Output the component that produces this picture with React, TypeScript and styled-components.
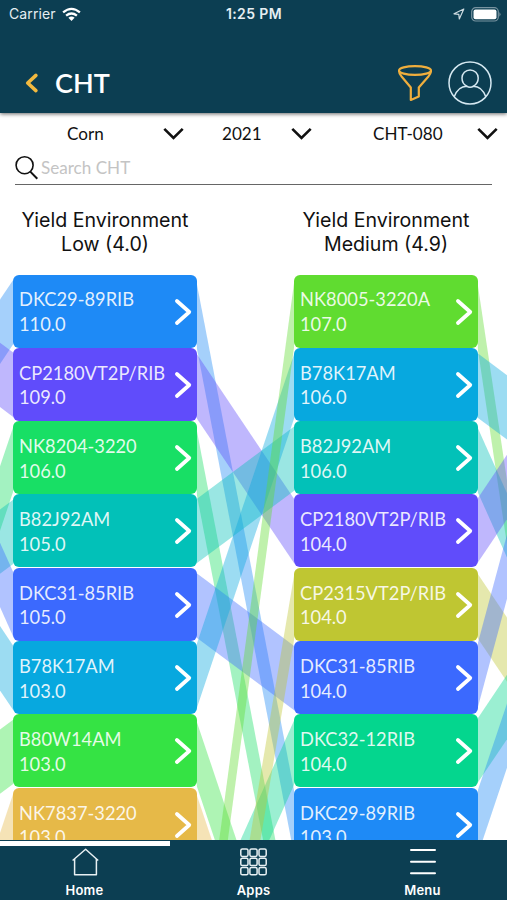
import React from 'react';
import styled, { createGlobalStyle } from 'styled-components';

const GlobalStyle = createGlobalStyle`
  * { box-sizing: border-box; }
  body { margin: 0; background: #fff; }
  button { border: 0; padding: 0; margin: 0; background: none; color: inherit; font: inherit; text-align: inherit; }
  svg { display: block; flex: none; }
`;

const NAVY = '#0c3e52';
const PITCH = 73.33;
const COLUMN_STEP = 281;
const RIBBON_INSET = 4.5;

const Screen = styled.div`
  width: 507px;
  height: 900px;
  display: flex;
  flex-direction: column;
  overflow: hidden;
  background: #fff;
  color: #111;
  font-family: Lato, sans-serif;
`;

const Header = styled.header`
  height: 113px;
  flex: none;
  background: ${NAVY};
  color: #fff;
  box-shadow: 0 1px 4px rgba(0, 0, 0, 0.6);
  z-index: 1;
`;

const StatusBar = styled.div`
  height: 28px;
  padding: 0 6px 0 9px;
  display: grid;
  grid-template-columns: 1fr auto 1fr;
  align-items: center;
  font: 400 14px/28px Inter, sans-serif;
  color: #e6eef2;
`;

const StatusSide = styled.div<{ $end?: boolean }>`
  display: flex;
  align-items: center;
  gap: 6px;
  letter-spacing: 0.1px;
  justify-content: ${(p) => (p.$end ? 'flex-end' : 'flex-start')};
`;

const Clock = styled.span`
  font-weight: 600;
  font-size: 14px;
  letter-spacing: 0.4px;
  padding-right: 2px;
`;

const TitleBar = styled.div`
  height: 82px;
  padding: 28px 15px 0 24px;
  display: flex;
  align-items: flex-start;
`;

const BackButton = styled.button`
  margin-top: 16px;
`;

const Title = styled.h1`
  margin: 9px auto 0 16px;
  font-size: 27px;
  line-height: 36px;
  font-weight: 600;
`;

const HeaderActions = styled.div`
  display: flex;
  align-items: center;
  gap: 16px;
  padding-top: 5px;
`;

const Filters = styled.div`
  height: 41px;
  flex: none;
  display: grid;
  grid-template-columns: 184px 128px 186px;
`;

const FilterSelect = styled.button<{ $inset: number }>`
  display: flex;
  align-items: center;
  justify-content: space-between;
  padding-left: ${(p) => p.$inset}px;
  font-size: 17.1px;
`;

const SearchField = styled.label`
  height: 31px;
  flex: none;
  margin: 0 15px;
  display: flex;
  align-items: center;
  gap: 3px;
  padding-bottom: 3px;
  border-bottom: 1px solid #666;
  font-size: 17.1px;
  color: #c4c4c4;
`;

const Headings = styled.div`
  height: 89.5px;
  flex: none;
  padding: 23px 0 0 13px;
  display: grid;
  grid-template-columns: 184px 184px;
  column-gap: 97px;
`;

const Heading = styled.h2`
  margin: 0;
  font: 400 19.6px/24.4px Inter, sans-serif;
  text-align: center;
  white-space: nowrap;
`;

const Board = styled.main`
  flex: 1;
  min-height: 0;
  position: relative;
  overflow: hidden;
`;

const Ribbons = styled.svg`
  position: absolute;
  inset: 0;
`;

const Columns = styled.div`
  position: relative;
  padding-left: 13px;
  display: grid;
  grid-template-columns: 184px 184px;
  column-gap: 97px;
`;

const Column = styled.div`
  display: flex;
  flex-direction: column;
`;

const Slot = styled.div`
  height: ${PITCH}px;
  background: rgba(255, 255, 255, 0.7);
`;

const Card = styled.button<{ $color: string }>`
  width: 183.5px;
  height: 73px;
  padding: 1px 5px 0 6px;
  display: flex;
  align-items: center;
  justify-content: space-between;
  border-radius: 6px;
  background: ${(p) => p.$color};
  color: rgba(255, 255, 255, 0.88);
  font-size: 18.3px;
  line-height: 24.5px;
  white-space: nowrap;
`;

const CardText = styled.span`
  display: flex;
  flex-direction: column;
  width: 150px;
  padding-top: 0.8px;
`;

const TabBar = styled.nav`
  height: 60px;
  flex: none;
  background: ${NAVY};
  color: #fff;
`;

const ActiveMark = styled.div`
  width: 169.5px;
  height: 6px;
  border-top: 1px solid ${NAVY};
  background: #fff;
`;

const Tabs = styled.div`
  height: 54px;
  display: grid;
  grid-template-columns: repeat(3, 1fr);
`;

const Tab = styled.button`
  display: flex;
  flex-direction: column;
  align-items: center;
  padding-top: 1px;
  font: 600 13px/16px Inter, sans-serif;
  letter-spacing: 0.2px;
`;

const TabIcon = styled.span`
  height: 35px;
  padding-top: 1px;
`;

type Entry = { name: string; value: string; color: string };

const low: Entry[] = [
  { name: 'DKC29-89RIB', value: '110.0', color: '#1e8af6' },
  { name: 'CP2180VT2P/RIB', value: '109.0', color: '#604cfb' },
  { name: 'NK8204-3220', value: '106.0', color: '#18df65' },
  { name: 'B82J92AM', value: '105.0', color: '#02c1b8' },
  { name: 'DKC31-85RIB', value: '105.0', color: '#3b69fe' },
  { name: 'B78K17AM', value: '103.0', color: '#07a8df' },
  { name: 'B80W14AM', value: '103.0', color: '#35e344' },
  { name: 'NK7837-3220', value: '103.0', color: '#e6b948' },
];

const medium: Entry[] = [
  { name: 'NK8005-3220A', value: '107.0', color: '#60dc30' },
  { name: 'B78K17AM', value: '106.0', color: '#07a8df' },
  { name: 'B82J92AM', value: '106.0', color: '#02c1b8' },
  { name: 'CP2180VT2P/RIB', value: '104.0', color: '#604cfb' },
  { name: 'CP2315VT2P/RIB', value: '104.0', color: '#bfc632' },
  { name: 'DKC31-85RIB', value: '104.0', color: '#3b69fe' },
  { name: 'DKC32-12RIB', value: '104.0', color: '#04d68e' },
  { name: 'DKC29-89RIB', value: '103.0', color: '#1e8af6' },
];

// [gap index, rank on the left side, rank on the right side, colour]
const links: [number, number, number, string][] = [
  [-1, 2, 0, '#1e8af6'],
  [-1, 0, 1, '#604cfb'],
  [-1, 6, 2, '#18df65'],
  [-1, 4, 3, '#02c1b8'],
  [-1, 1, 4, '#3b69fe'],
  [-1, 3, 5, '#07a8df'],
  [-1, 7, 6, '#35e344'],
  [-1, 11, 7, '#e6b948'],
  [0, 0, 7, '#1e8af6'],
  [0, 1, 3, '#604cfb'],
  [0, 2, 9, '#18df65'],
  [0, 3, 2, '#02c1b8'],
  [0, 4, 5, '#3b69fe'],
  [0, 5, 1, '#07a8df'],
  [0, 6, 10, '#35e344'],
  [0, 7, 11, '#e6b948'],
  [0, 9, 6, '#04d68e'],
  [0, 10, 0, '#60dc30'],
  [0, 12, 4, '#bfc632'],
  [1, 0, 9, '#60dc30'],
  [1, 1, 2, '#07a8df'],
  [1, 2, 5, '#02c1b8'],
  [1, 3, 1, '#604cfb'],
  [1, 4, 6, '#bfc632'],
  [1, 5, 0, '#3b69fe'],
  [1, 6, 4, '#04d68e'],
  [1, 7, 3, '#1e8af6'],
];

function ribbonPoints(gap: number, from: number, to: number) {
  const x1 = 196 + gap * COLUMN_STEP;
  const x2 = 294.5 + gap * COLUMN_STEP;
  const a = from * PITCH + RIBBON_INSET;
  const b = to * PITCH + RIBBON_INSET;
  const h = PITCH - 2 * RIBBON_INSET;
  return `${x1},${a} ${x2},${b} ${x2},${b + h} ${x1},${a + h}`;
}

const DownChevron = () => (
  <svg width="21" height="14" viewBox="0 0 21 14" fill="none" stroke="#111" strokeWidth="2.6">
    <path d="M1.3 1.8 L10.5 11 L19.7 1.8" />
  </svg>
);

const RightChevron = () => (
  <svg width="18" height="28" viewBox="0 0 18 28" fill="none" stroke="#fff" strokeWidth="3.7" strokeLinecap="round" strokeLinejoin="round">
    <path d="M2.9 3 L15.3 14 L2.9 25" />
  </svg>
);

const WifiIcon = () => (
  <svg width="19" height="15" viewBox="0 0 19 15" fill="none" stroke="#fff" strokeWidth="2.3">
    <path d="M1.1 5.4 Q9.5 -1.7 17.9 5.4" />
    <path d="M4.1 8.7 Q9.5 4.3 14.9 8.7" />
    <path d="M6.4 10.8 Q9.5 8.4 12.6 10.8 L9.5 14 Z" fill="#fff" stroke="none" />
  </svg>
);

const LocationIcon = () => (
  <svg width="12" height="12" viewBox="0 0 12 12" fill="none" stroke="#cddae0" strokeWidth="1.2" strokeLinejoin="round">
    <path d="M10.8 1 L1 5.8 L5.8 6.3 L6.3 11 Z" />
  </svg>
);

const BatteryIcon = () => (
  <svg width="30" height="15" viewBox="0 0 30 15">
    <rect x="0.7" y="0.7" width="26.6" height="13.3" rx="4" fill="none" stroke="#7893a0" strokeWidth="1.2" />
    <rect x="2.5" y="2.5" width="23" height="9.7" rx="2" fill="#fff" />
    <path d="M28.4 5 Q30.6 7.3 28.4 9.8 Z" fill="#7893a0" />
  </svg>
);

const BackIcon = () => (
  <svg width="15" height="22" viewBox="0 0 15 22" fill="none" stroke="#f2b93f" strokeWidth="3.6" strokeLinecap="round" strokeLinejoin="round">
    <path d="M11.9 3.4 L3.7 11 L11.9 18.6" />
  </svg>
);

const FunnelIcon = () => (
  <svg width="35" height="37" viewBox="0 0 35 37" fill="none" stroke="#efae3d" strokeWidth="2.2" strokeLinejoin="round">
    <ellipse cx="18" cy="5.5" rx="16" ry="4.4" />
    <path d="M2 5.5 C2 8.3 3.3 9.8 4.6 11.5 L13.8 22.5 V34.9 L21.8 31.5 V22.5 L31.4 11.5 C32.7 9.8 34 8.3 34 5.5" />
  </svg>
);

const ProfileIcon = () => (
  <svg width="44" height="44" viewBox="0 0 44 44" fill="none" stroke="#d5e8f1" strokeWidth="1.5">
    <circle cx="22" cy="22" r="21" />
    <path d="M18.8 25.2 C16 23.8 14 21 14 17 A8.1 8.1 0 0 1 30.2 17 C30.2 21 28 23.8 25.4 25.2" />
    <path d="M6.2 35.8 C8.5 29.5 12.5 25.3 18.8 25.2 C20.5 26.6 23.7 26.6 25.4 25.2 C31.5 25.3 35.5 29.5 37.8 35.8" />
  </svg>
);

const SearchIcon = () => (
  <svg width="23" height="25" viewBox="0 0 23 25" fill="none" stroke="#111" strokeWidth="1.6">
    <circle cx="9.6" cy="10.2" r="8.5" />
    <path d="M15.3 16.6 L22.3 23.7" strokeWidth="2" />
  </svg>
);

const HomeIcon = () => (
  <svg width="28" height="28" viewBox="0 0 28 28" fill="none" stroke="#e8f0f3" strokeWidth="1.5" strokeLinejoin="round">
    <path d="M1.6 12.5 L14.6 1.3 L27.2 12.5" />
    <path d="M3.6 11 V26.8 H25.4 V11" />
  </svg>
);

const AppsIcon = () => (
  <svg width="28" height="28" viewBox="0 0 28 28" fill="none" stroke="#e8f0f3" strokeWidth="1.5">
    {[1, 10.2, 19.4].map((y) =>
      [0.8, 9.9, 19].map((x) => <rect key={`${x}-${y}`} x={x} y={y} width="7.2" height="7.4" rx="1.6" />)
    )}
  </svg>
);

const MenuIcon = () => (
  <svg width="26" height="28" viewBox="0 0 26 28" stroke="#fff" strokeWidth="2" strokeLinecap="round">
    <path d="M1 2 H25 M1 13.7 H25 M1 25.3 H25" />
  </svg>
);

const CardColumn = ({ entries }: { entries: Entry[] }) => (
  <Column>
    {entries.map((entry) => (
      <Slot key={entry.name}>
        <Card $color={entry.color}>
          <CardText>
            <span>{entry.name}</span>
            <span>{entry.value}</span>
          </CardText>
          <RightChevron />
        </Card>
      </Slot>
    ))}
  </Column>
);

export default function App() {
  return (
    <>
      <GlobalStyle />
      <Screen>
        <Header>
          <StatusBar>
            <StatusSide>Carrier <WifiIcon /></StatusSide>
            <Clock>1:25 PM</Clock>
            <StatusSide $end><LocationIcon /><BatteryIcon /></StatusSide>
          </StatusBar>
          <TitleBar>
            <BackButton aria-label="Back"><BackIcon /></BackButton>
            <Title>CHT</Title>
            <HeaderActions><FunnelIcon /><ProfileIcon /></HeaderActions>
          </TitleBar>
        </Header>
        <Filters>
          <FilterSelect $inset={67}>Corn<DownChevron /></FilterSelect>
          <FilterSelect $inset={38}>2021<DownChevron /></FilterSelect>
          <FilterSelect $inset={61}>CHT-080<DownChevron /></FilterSelect>
        </Filters>
        <SearchField><SearchIcon />Search CHT</SearchField>
        <Headings>
          <Heading>Yield Environment<br />Low (4.0)</Heading>
          <Heading>Yield Environment<br />Medium (4.9)</Heading>
        </Headings>
        <Board>
          <Ribbons width="507" height="566">
            {links.map(([gap, from, to, color]) => (
              <polygon key={`${gap}-${from}-${to}`} points={ribbonPoints(gap, from, to)} fill={color} fillOpacity={0.4} />
            ))}
          </Ribbons>
          <Columns>
            <CardColumn entries={low} />
            <CardColumn entries={medium} />
          </Columns>
        </Board>
        <TabBar>
          <ActiveMark />
          <Tabs>
            <Tab><TabIcon><HomeIcon /></TabIcon>Home</Tab>
            <Tab><TabIcon><AppsIcon /></TabIcon>Apps</Tab>
            <Tab><TabIcon><MenuIcon /></TabIcon>Menu</Tab>
          </Tabs>
        </TabBar>
      </Screen>
    </>
  );
}
